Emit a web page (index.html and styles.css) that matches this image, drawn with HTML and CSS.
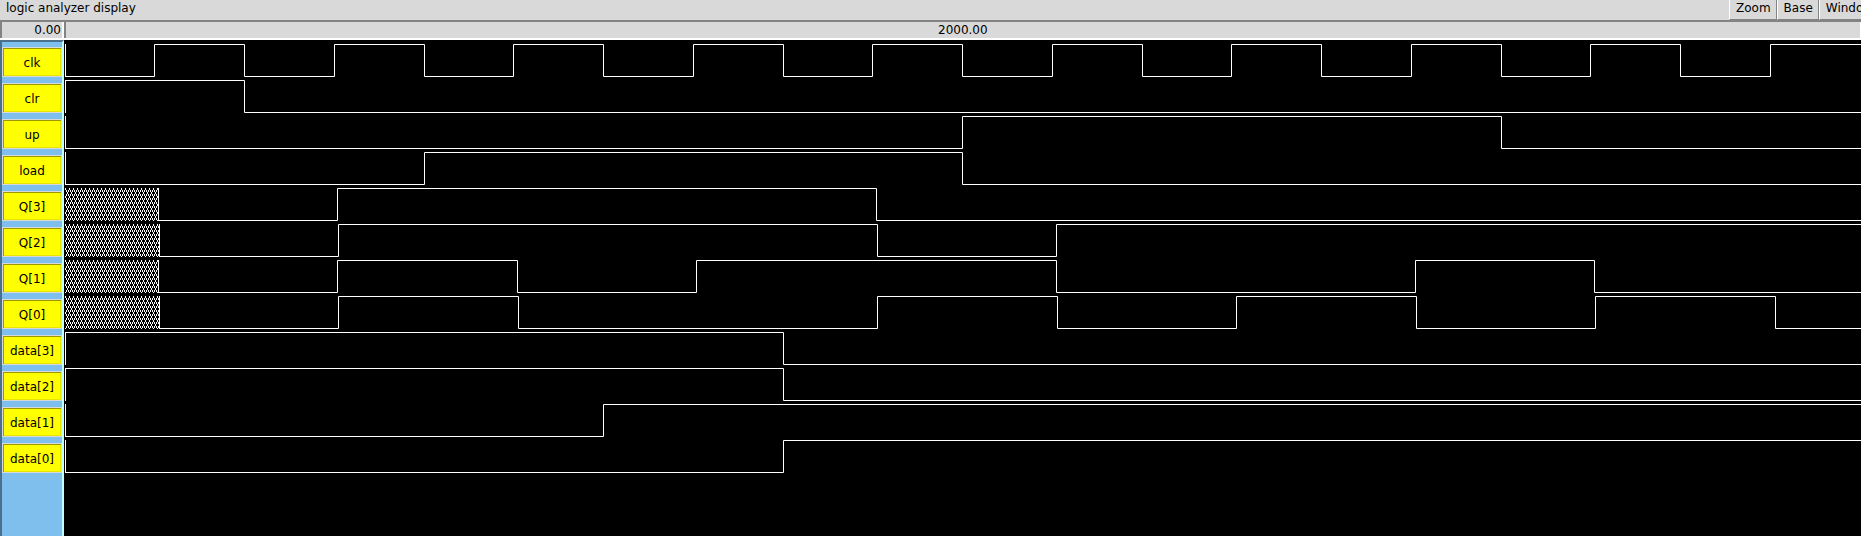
FILE: index.html
```
<!DOCTYPE html>
<html lang="en">
<head>
<meta charset="utf-8">
<title>logic analyzer display</title>
<link rel="stylesheet" href="styles.css">
</head>
<body>
<header class="titlebar">
  <h1 class="title">logic analyzer display</h1>
  <nav class="menu">
    <button class="menu-item" type="button">Zoom</button>
    <button class="menu-item" type="button">Base</button>
    <button class="menu-item" type="button">Window</button>
  </nav>
</header>
<div class="timebar">
  <div class="time-origin">0.00</div>
  <div class="time-scale"><span class="tick">2000.00</span></div>
</div>
<main class="analyzer">
  <div class="signals" id="signals"></div>
  <div class="waves" id="waves"></div>
</main>
<script src="waves.js"></script>
</body>
</html>
```

FILE: styles.css
```
* { box-sizing: border-box; }
body {
  margin: 0;
  height: 100vh;
  display: flex;
  flex-direction: column;
  overflow: hidden;
  background: #000;
  color: #000;
  font: 12px/16px "DejaVu Sans", sans-serif;
}
.titlebar {
  display: flex;
  flex: none;
  justify-content: space-between;
  height: 20px;
  background: #d9d9d9;
  overflow: hidden;
}
.title {
  margin: 0;
  padding-left: 6px;
  font-size: 12px;
  font-weight: 400;
  line-height: 16px;
}
.menu {
  display: flex;
  flex: none;
  width: 132px;
  overflow: hidden;
}
.menu-item {
  flex: none;
  height: 20px;
  margin: 0;
  padding: 0 5px 3px 6px;
  border: solid;
  border-width: 0 1px 1px;
  border-color: #838383 #838383 #838383 #fff;
  background: #d9d9d9;
  color: #000;
  font: inherit;
}
.timebar {
  display: flex;
  flex: none;
  height: 20px;
  background: #d9d9d9;
  border-top: 2px solid #838383;
  border-bottom: 2px solid #fff;
}
.time-origin {
  flex: none;
  width: 64px;
  padding-right: 1px;
  border-left: 2px solid #838383;
  border-right: 2px solid #fff;
  text-align: right;
}
.time-scale {
  flex: 1;
  border-left: 2px solid #838383;
  border-right: 1px solid #fff;
  padding-left: 872px;
}
.analyzer {
  display: flex;
  flex: 1;
  min-height: 0;
}
.signals {
  flex: none;
  width: 64px;
  display: flex;
  flex-direction: column;
  gap: 6px;
  padding-top: 5px;
  border: solid;
  border-width: 2px 2px 0;
  border-color: #4a708b #bfffff #bfffff #4a708b;
  background: #7ebfee;
}
.signal {
  flex: none;
  height: 30px;
  margin: 0;
  padding: 1px 0 0;
  border: 1px solid #d9d9d9;
  box-shadow: inset 1px 1px #999900, inset -1px -1px #e6e600;
  background: #ff0;
  color: #000;
  font: inherit;
}
.waves {
  flex: 1;
  min-width: 0;
  overflow: hidden;
}
.wave {
  display: block;
  width: 100%;
  height: 36px;
}
.wave:first-child { margin-top: 1px; }
.trace { fill: none; stroke: #fff; stroke-width: 1; }
.hatch { fill: url(#unknown); }
.dot { fill: #fff; }
```

FILE: waves.js
```
const STEP = 89.76;
const START = 0.5;
const END = 8000;
const HIGH = 3.5;
const LOW = 35.5;

// edges: half-clock counts at which the level toggles; delay in pixels
const signals = [
  { name: "clk", level: 0, edges: Array.from({ length: 19 }, (_, i) => i + 1) },
  { name: "clr", level: 1, edges: [2] },
  { name: "up", level: 0, edges: [10, 16] },
  { name: "load", level: 0, edges: [4, 10] },
  { name: "Q[3]", level: 0, edges: [3, 9], delay: 3.65, unknown: true },
  { name: "Q[2]", level: 0, edges: [3, 9, 11], delay: 4.55, unknown: true },
  { name: "Q[1]", level: 0, edges: [3, 5, 7, 11, 15, 17], delay: 3.65, unknown: true },
  { name: "Q[0]", level: 0, edges: [3, 5, 9, 11, 13, 15, 17, 19], delay: 4.65, unknown: true },
  { name: "data[3]", level: 1, edges: [8] },
  { name: "data[2]", level: 1, edges: [8] },
  { name: "data[1]", level: 0, edges: [6] },
  { name: "data[0]", level: 0, edges: [8] }
];

const position = (edge, delay = 0) => Math.round(START + edge * STEP + delay) + 0.5;

function trace(signal) {
  let level = signal.level;
  let x = signal.unknown ? position(1, signal.delay) : 1.5;
  let d = `M${x} ${HIGH - 0.5}V${LOW + 0.5}M${x} ${level ? HIGH : LOW}`;
  for (const edge of signal.edges) {
    level = 1 - level;
    d += `H${position(edge, signal.delay)}V${level ? HIGH : LOW}`;
  }
  return d + `H${END}`;
}

const pattern = `<defs><pattern id="unknown" width="4" height="8" patternUnits="userSpaceOnUse">
<path class="dot" d="M1 3h1v2h-1zM0 5h1v2h-1zM2 5h1v2h-1zM3 0h1v1h-1zM3 7h1v1h-1zM0 1h1v2h-1zM2 1h1v2h-1z"/></pattern></defs>`;

const list = document.getElementById("signals");
const waves = document.getElementById("waves");

signals.forEach((signal, i) => {
  const button = document.createElement("button");
  button.type = "button";
  button.className = "signal";
  button.textContent = signal.name;
  list.append(button);

  const hatch = signal.unknown
    ? `<rect class="hatch" x="1" y="3" width="${position(1, signal.delay) - 1.5}" height="33"/>` : "";
  waves.insertAdjacentHTML("beforeend",
    `<svg class="wave" role="img" aria-label="${signal.name}">${i ? "" : pattern}${hatch}<path class="trace" d="${trace(signal)}"/></svg>`);
});
```
